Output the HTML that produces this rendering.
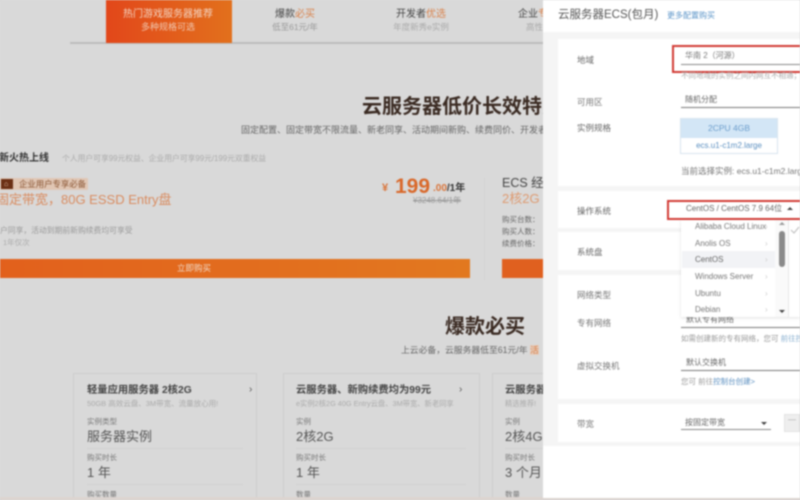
<!DOCTYPE html>
<html lang="zh">
<head>
<meta charset="utf-8">
<style>
html,body{margin:0;padding:0;width:800px;height:500px;overflow:hidden;background:#d9d9d9}
#w{position:relative;width:800px;height:500px;overflow:hidden;filter:blur(.7px);font-family:"Liberation Sans","Noto Sans CJK SC",sans-serif;background:#d9d9d9}
.a{position:absolute;white-space:nowrap;line-height:1}
.b{position:absolute}
.c{transform:translateX(-50%)}
</style>
</head>
<body>
<div id="w">
<!-- left page -->
<div class="b" style="left:70px;top:42px;width:473px;height:2px;background:#bcbcbc"></div>
<div class="b" style="left:106px;top:0;width:126px;height:43px;background:linear-gradient(90deg,#e2471a,#e2701c)"></div>
<div class="a c" style="left:168px;top:10px;font-size:10px;color:#f3d3c0">热门游戏服务器推荐</div>
<div class="a c" style="left:168px;top:23px;font-size:9px;color:#f0c8b0">多种规格可选</div>
<div class="a c" style="left:295px;top:10px;font-size:10px;color:#444">爆款<span style="color:#d9814a">必买</span></div>
<div class="a c" style="left:295px;top:23px;font-size:8.5px;color:#999">低至61元/年</div>
<div class="a c" style="left:421px;top:10px;font-size:10px;color:#444">开发者<span style="color:#d9814a">优选</span></div>
<div class="a c" style="left:421px;top:23px;font-size:8.5px;color:#aaa">年度新秀e实例</div>
<div class="a" style="left:518px;top:10px;font-size:10px;color:#444">企业<span style="color:#d9814a">专享</span></div>
<div class="a" style="left:526px;top:23px;font-size:8.5px;color:#aaa">高性能</div>

<div class="a" style="left:362px;top:97px;font-size:20px;font-weight:bold;color:#3a2a22">云服务器低价长效特惠</div>
<div class="a" style="left:241px;top:126px;font-size:9px;color:#666">固定配置、固定带宽不限流量、新老同享、活动期间新购、续费同价、开发者专享</div>
<div class="a" style="left:-1px;top:154px;font-size:10px;font-weight:bold;color:#333">新火热上线</div>
<div class="a" style="left:62px;top:155px;font-size:7.800px;color:#aaa">个人用户可享99元权益、企业用户可享99元/199元双重权益</div>

<div class="b" style="left:0;top:178px;width:88px;height:12px;background:#e0c6b4;border-radius:1px"></div>
<div class="b" style="left:1px;top:179px;width:12px;height:10px;background:#6b2f14"></div>
<div class="a" style="left:4px;top:181px;font-size:7px;color:#f3d8c4">⌂</div>
<div class="a" style="left:19px;top:180px;font-size:8.400px;color:#8a5533">企业用户专享必备</div>
<div class="a" style="left:-4px;top:193px;font-size:13px;color:#d98b5f">固定带宽，80G ESSD Entry盘</div>
<div class="a" style="left:0;top:227px;font-size:7.800px;color:#999">户同享，活动到期前新购续费均可享受</div>
<div class="a" style="left:3px;top:239px;font-size:7.500px;color:#aaa">1年仅次</div>
<div class="a" style="left:382px;top:183px;font-size:11px;font-weight:bold;color:#d9743a">¥</div>
<div class="a" style="left:395px;top:176px;font-size:21px;font-weight:bold;color:#d9682a">199</div>
<div class="a" style="left:433px;top:184px;font-size:10px;font-weight:bold;color:#d9743a">.00<span style="color:#333">/1年</span></div>
<div class="a" style="left:413px;top:197px;font-size:8px;color:#999;text-decoration:line-through">¥3248.64/1年</div>
<div class="b" style="left:0;top:259px;width:470px;height:19px;background:linear-gradient(90deg,#e2601c,#e2781f)"></div>
<div class="a c" style="left:194px;top:264px;font-size:8.500px;color:#f0d8c6">立即购买</div>
<div class="b" style="left:484px;top:178px;width:1px;height:102px;background:#d2d2d2"></div>
<div class="a" style="left:502px;top:177px;font-size:12.500px;color:#444">ECS 经济型</div>
<div class="a" style="left:502px;top:192px;font-size:13px;color:#de9a70">2核2G</div>
<div class="a" style="left:502px;top:216px;font-size:7.500px;color:#666">购买台数：</div>
<div class="a" style="left:502px;top:228px;font-size:7.500px;color:#666">购买人数：</div>
<div class="a" style="left:502px;top:240px;font-size:7.500px;color:#666">续费价格：</div>
<div class="b" style="left:502px;top:259px;width:41px;height:19px;background:#e0601f"></div>

<div class="a" style="left:445px;top:317px;font-size:20px;font-weight:bold;color:#3a2a22">爆款必买</div>
<div class="a" style="left:401px;top:346px;font-size:8.800px;color:#666">上云必备，云服务器低至61元/年 <span style="color:#d9814a;background:#e5cdbd">活</span></div>

<div class="b" style="left:73px;top:373px;width:184px;height:130px;border:1px solid #cdcdcd;box-sizing:border-box"></div>
<div class="b" style="left:283px;top:373px;width:197px;height:130px;border:1px solid #cdcdcd;box-sizing:border-box"></div>
<div class="b" style="left:492px;top:373px;width:60px;height:130px;border:1px solid #cdcdcd;box-sizing:border-box"></div>

<div class="a" style="left:87px;top:386px;font-size:10.300px;font-weight:bold;color:#444">轻量应用服务器 2核2G</div>
<div class="a" style="left:249px;top:385px;font-size:10px;color:#555">›</div>
<div class="a" style="left:87px;top:400px;font-size:7.500px;color:#aaa">50GB 高效云盘、3M带宽、流量放心用!</div>
<div class="a" style="left:87px;top:418px;font-size:7.500px;color:#777">实例类型</div>
<div class="a" style="left:87px;top:430px;font-size:13px;color:#555">服务器实例</div>
<div class="b" style="left:87px;top:448px;width:156px;height:1px;background:#d0d0d0"></div>
<div class="a" style="left:87px;top:454px;font-size:7.500px;color:#777">购买时长</div>
<div class="a" style="left:87px;top:466px;font-size:13px;color:#555">1 年</div>
<div class="b" style="left:87px;top:484px;width:156px;height:1px;background:#d0d0d0"></div>
<div class="a" style="left:87px;top:491px;font-size:7.500px;color:#777">购买数量</div>

<div class="a" style="left:296px;top:386px;font-size:10.300px;font-weight:bold;color:#444">云服务器、新购续费均为99元</div>
<div class="a" style="left:459px;top:385px;font-size:10px;color:#555">›</div>
<div class="a" style="left:296px;top:400px;font-size:7.300px;color:#aaa">e实例2核2G 40G Entry云盘、3M带宽、新老同享</div>
<div class="a" style="left:296px;top:418px;font-size:7.500px;color:#777">实例</div>
<div class="a" style="left:296px;top:430px;font-size:13px;color:#555">2核2G</div>
<div class="b" style="left:296px;top:448px;width:170px;height:1px;background:#d0d0d0"></div>
<div class="a" style="left:296px;top:454px;font-size:7.500px;color:#777">购买时长</div>
<div class="a" style="left:296px;top:466px;font-size:13px;color:#555">1 年</div>
<div class="b" style="left:296px;top:484px;width:170px;height:1px;background:#d0d0d0"></div>
<div class="a" style="left:296px;top:491px;font-size:7.500px;color:#777">数量</div>

<div class="a" style="left:505px;top:386px;font-size:10.300px;font-weight:bold;color:#444">云服务器</div>
<div class="a" style="left:505px;top:400px;font-size:7.300px;color:#aaa">精选推荐!</div>
<div class="a" style="left:505px;top:418px;font-size:7.500px;color:#777">实例</div>
<div class="a" style="left:505px;top:430px;font-size:13px;color:#555">2核4G</div>
<div class="b" style="left:505px;top:448px;width:40px;height:1px;background:#d0d0d0"></div>
<div class="a" style="left:505px;top:454px;font-size:7.500px;color:#777">购买时长</div>
<div class="a" style="left:505px;top:466px;font-size:13px;color:#555">3 个月</div>
<div class="a" style="left:505px;top:491px;font-size:7.500px;color:#777">数量</div>

<!-- bottom strip -->
<div class="b" style="left:0;top:497px;width:800px;height:3px;background:#dcd4d0"></div>

<!-- right panel -->
<div class="b" style="left:543px;top:0;width:257px;height:498px;background:#fff"></div>
<div class="b" style="left:543px;top:32px;width:257px;height:414px;background:#f5f5f5"></div>
<div class="b" style="left:558px;top:39px;width:242px;height:147px;background:#fff"></div>
<div class="b" style="left:558px;top:191px;width:242px;height:37px;background:#fff"></div>
<div class="b" style="left:558px;top:232px;width:242px;height:38px;background:#fff"></div>
<div class="b" style="left:558px;top:275px;width:242px;height:124px;background:#fff"></div>
<div class="b" style="left:558px;top:404px;width:242px;height:38px;background:#fff"></div>

<div class="a" style="left:558px;top:10px;font-size:11.500px;color:#555">云服务器ECS(包月)</div>
<div class="a" style="left:667px;top:12px;font-size:8px;color:#5b94c8">更多配置购买</div>

<div class="a" style="left:577px;top:56px;font-size:8.500px;color:#666">地域</div>
<div class="b" style="left:672px;top:45px;width:140px;height:28px;border:2px solid #d23a34;box-sizing:border-box"></div>
<div class="a" style="left:685px;top:52px;font-size:8px;color:#777">华南 2（河源）</div>
<div class="b" style="left:681px;top:64px;width:119px;height:1px;background:#888"></div>
<div class="a" style="left:681px;top:72px;font-size:7.500px;color:#aaa">不同地域的实例之间内网互不相通；</div>

<div class="a" style="left:577px;top:98px;font-size:8.500px;color:#777">可用区</div>
<div class="a" style="left:685px;top:96px;font-size:8px;color:#666">随机分配</div>
<div class="b" style="left:681px;top:107px;width:119px;height:1px;background:#777"></div>

<div class="a" style="left:577px;top:124px;font-size:8.500px;color:#666">实例规格</div>
<div class="b" style="left:680px;top:118px;width:98px;height:36px;border:1px solid #d8e4ee;box-sizing:border-box;background:#fff"></div>
<div class="b" style="left:681px;top:119px;width:96px;height:19px;background:#d3e6f6"></div>
<div class="a c" style="left:729px;top:124px;font-size:8.500px;color:#6a9ccb">2CPU 4GB</div>
<div class="a c" style="left:729px;top:142px;font-size:8px;color:#5b8fc0">ecs.u1-c1m2.large</div>
<div class="a" style="left:681px;top:167px;font-size:8.500px;color:#777">当前选择实例: ecs.u1-c1m2.large</div>

<div class="a" style="left:577px;top:207px;font-size:8.500px;color:#666">操作系统</div>
<div class="b" style="left:667px;top:200px;width:145px;height:20px;border:2px solid #d23a34;box-sizing:border-box"></div>
<div class="a" style="left:686px;top:205px;font-size:8px;color:#666">CentOS / CentOS 7.9 64位</div>
<div class="b" style="left:787px;top:207px;width:0;height:0;border-left:3px solid transparent;border-right:3px solid transparent;border-bottom:3px solid #444"></div>

<div class="a" style="left:577px;top:248px;font-size:8.500px;color:#666">系统盘</div>
<div class="a" style="left:577px;top:291px;font-size:8.500px;color:#777">网络类型</div>
<div class="a" style="left:577px;top:319px;font-size:8.500px;color:#777">专有网络</div>
<div class="a" style="left:686px;top:316px;font-size:8px;color:#666">默认专有网络</div>
<div class="b" style="left:681px;top:327px;width:119px;height:1px;background:#777"></div>
<div class="a" style="left:681px;top:335px;font-size:7.500px;color:#999">如需创建新的专有网络，您可 <span style="color:#8ab0d0">前往控制台</span></div>
<div class="a" style="left:577px;top:362px;font-size:8.500px;color:#777">虚拟交换机</div>
<div class="a" style="left:686px;top:359px;font-size:8px;color:#666">默认交换机</div>
<div class="b" style="left:681px;top:370px;width:119px;height:1px;background:#777"></div>
<div class="a" style="left:681px;top:378px;font-size:7.500px;color:#999">您可 前往<span style="color:#5b8fc0">控制台创建&gt;</span></div>
<div class="a" style="left:577px;top:420px;font-size:8.500px;color:#777">带宽</div>
<div class="a" style="left:685px;top:419px;font-size:8px;color:#666">按固定带宽</div>
<div class="b" style="left:761px;top:422px;width:0;height:0;border-left:3px solid transparent;border-right:3px solid transparent;border-top:3px solid #444"></div>
<div class="b" style="left:681px;top:429px;width:90px;height:1px;background:#888"></div>
<div class="b" style="left:784px;top:414px;width:16px;height:18px;background:#eee;border:1px solid #e2e2e2;box-sizing:border-box"></div>
<div class="a" style="left:788px;top:416px;font-size:8px;color:#aaa">—</div>

<!-- dropdown -->
<div class="b" style="left:681px;top:220px;width:119px;height:97px;background:#fff;box-shadow:0 1px 3px rgba(0,0,0,.12)"></div>
<div class="b" style="left:682px;top:251px;width:93px;height:17px;background:#f2f3f6"></div>
<div class="a" style="left:695px;top:223px;font-size:8px;color:#777">Alibaba Cloud Linux</div>
<div class="a" style="left:695px;top:240px;font-size:8px;color:#777">Anolis OS</div>
<div class="a" style="left:695px;top:256px;font-size:8px;color:#666">CentOS</div>
<div class="a" style="left:695px;top:273px;font-size:8px;color:#777">Windows Server</div>
<div class="a" style="left:695px;top:290px;font-size:8px;color:#777">Ubuntu</div>
<div class="a" style="left:695px;top:306px;font-size:8px;color:#777">Debian</div>
<div class="a" style="left:765px;top:223px;font-size:8px;color:#ccc">›</div>
<div class="a" style="left:765px;top:240px;font-size:8px;color:#ccc">›</div>
<div class="a" style="left:765px;top:256px;font-size:8px;color:#ccc">›</div>
<div class="a" style="left:765px;top:273px;font-size:8px;color:#ccc">›</div>
<div class="a" style="left:765px;top:290px;font-size:8px;color:#ccc">›</div>
<div class="a" style="left:765px;top:306px;font-size:8px;color:#ccc">›</div>
<div class="b" style="left:775px;top:220px;width:13px;height:97px;background:#fafafa"></div>
<div class="b" style="left:779px;top:231px;width:6px;height:36px;background:#8a8a8a;border-radius:3px"></div>
<div class="b" style="left:779px;top:222px;width:0;height:0;border-left:3px solid transparent;border-right:3px solid transparent;border-bottom:3px solid #999"></div>
<div class="b" style="left:779px;top:310px;width:0;height:0;border-left:3px solid transparent;border-right:3px solid transparent;border-top:3px solid #444"></div>
<div class="b" style="left:788px;top:220px;width:1px;height:97px;background:#e8e8e8"></div>
<svg class="b" style="left:790px;top:225px" width="10" height="10" viewBox="0 0 10 10"><path d="M1 5l3 3 5-6" fill="none" stroke="#bbb" stroke-width="1"/></svg>
</div>
</body>
</html>
